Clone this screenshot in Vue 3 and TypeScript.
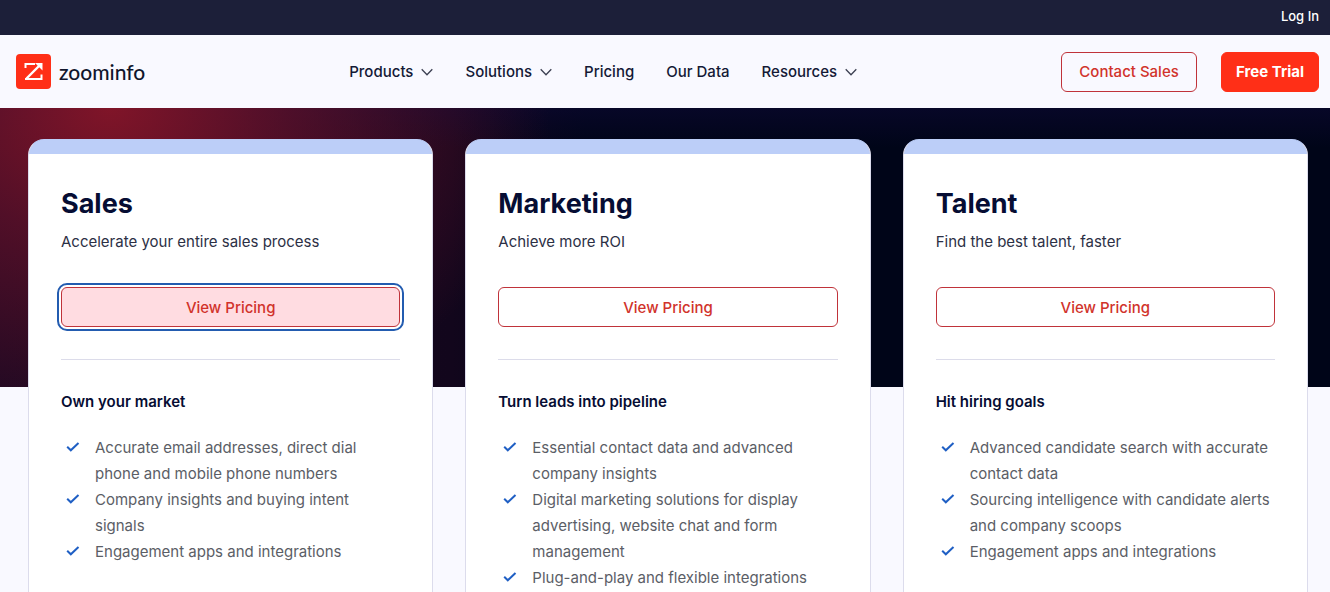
<script setup lang="ts">
interface NavItem {
  label: string
  menu: boolean
}
interface Plan {
  name: string
  tagline: string
  goal: string
  features: string[]
  active: boolean
}

const navItems: NavItem[] = [
  { label: 'Products', menu: true },
  { label: 'Solutions', menu: true },
  { label: 'Pricing', menu: false },
  { label: 'Our Data', menu: false },
  { label: 'Resources', menu: true },
]

const plans: Plan[] = [
  {
    name: 'Sales',
    tagline: 'Accelerate your entire sales process',
    goal: 'Own your market',
    features: [
      'Accurate email addresses, direct dial phone and mobile phone numbers',
      'Company insights and buying intent signals',
      'Engagement apps and integrations',
    ],
    active: true,
  },
  {
    name: 'Marketing',
    tagline: 'Achieve more ROI',
    goal: 'Turn leads into pipeline',
    features: [
      'Essential contact data and advanced company insights',
      'Digital marketing solutions for display advertising, website chat and form management',
      'Plug-and-play and flexible integrations',
    ],
    active: false,
  },
  {
    name: 'Talent',
    tagline: 'Find the best talent, faster',
    goal: 'Hit hiring goals',
    features: [
      'Advanced candidate search with accurate contact data',
      'Sourcing intelligence with candidate alerts and company scoops',
      'Engagement apps and integrations',
    ],
    active: false,
  },
]
</script>

<template>
  <div class="page">
    <div class="topbar"><a href="#login">Log In</a></div>

    <header class="header">
      <a class="logo" href="#home">
        <svg width="35" height="35" viewBox="0 0 35 35" aria-hidden="true">
          <rect width="35" height="35" rx="4" fill="#ff2f17" />
          <g fill="none" stroke="#fff" stroke-width="2">
            <path d="M9.500 14V10H19" />
            <path d="M23.500 11.500L10.500 24.500" stroke-width="2.400" />
            <path d="M9 25H25.500V20.500" />
          </g>
          <path d="M19 9H26.500V16.500Z" fill="#fff" />
        </svg>
        <span class="wordmark">zoominfo</span>
      </a>

      <nav class="nav" aria-label="Main">
        <template v-for="item in navItems" :key="item.label">
          <button v-if="item.menu" type="button" class="nav-item">
            {{ item.label }}
            <svg width="12" height="8" viewBox="0 0 12 8" aria-hidden="true">
              <path d="M.7 1.200L6 6.700L11.300 1.200" fill="none" stroke="#3c4052" stroke-width="1.300" />
            </svg>
          </button>
          <a v-else class="nav-item" :href="'#' + item.label">{{ item.label }}</a>
        </template>
      </nav>

      <div class="actions">
        <button type="button" class="btn outline contact">Contact Sales</button>
        <button type="button" class="btn solid">Free Trial</button>
      </div>
    </header>

    <main class="plans">
      <article v-for="plan in plans" :key="plan.name" class="card">
        <h2>{{ plan.name }}</h2>
        <p class="tagline">{{ plan.tagline }}</p>
        <button type="button" class="btn outline view" :class="{ active: plan.active }">View Pricing</button>
        <hr />
        <h3>{{ plan.goal }}</h3>
        <ul>
          <li v-for="feature in plan.features" :key="feature">
            <svg width="14" height="10" viewBox="0 0 14 10" aria-hidden="true">
              <path d="M1.200 4.800L4.800 8.300L12.500 1" fill="none" stroke="#1f5fc4" stroke-width="2" />
            </svg>
            <span>{{ feature }}</span>
          </li>
        </ul>
      </article>
    </main>
  </div>
</template>

<style>
body {
  margin: 0;
}
</style>

<style scoped>
.page {
  height: 100vh;
  overflow: hidden;
  background: #f9f9ff;
  color: #060d33;
  font-family: Inter, "Open Sans", sans-serif;
  font-size: 15px;
}
a {
  color: inherit;
  text-decoration: none;
}
button {
  font: inherit;
  cursor: pointer;
}
.topbar {
  display: flex;
  justify-content: flex-end;
  height: 35px;
  padding: 0 11px;
  background: #1c1f39;
  color: #fff;
  font-size: 13px;
  font-weight: 500;
  line-height: 32px;
}
.header {
  display: flex;
  align-items: center;
  justify-content: space-between;
  height: 73px;
  padding: 0 11px 0 16px;
}
.logo {
  display: flex;
  align-items: center;
  gap: 8px;
}
.wordmark {
  font-family: Lato, sans-serif;
  font-size: 21px;
  font-weight: 500;
  line-height: 32px;
  color: #10152c;
}
.nav {
  display: flex;
  gap: 32px;
}
.nav-item {
  display: flex;
  align-items: center;
  gap: 8px;
  padding: 0;
  border: 0;
  background: none;
  color: #141936;
  font-weight: 500;
  line-height: 24px;
}
.actions {
  display: flex;
  gap: 24px;
}
.btn {
  box-sizing: border-box;
  height: 40px;
  padding: 0 14px;
  border: 1px solid #ff2f17;
  border-radius: 6px;
  font-weight: 500;
  white-space: nowrap;
}
.outline {
  border-color: #c0333a;
  background: transparent;
  color: #d1332b;
}
.contact {
  min-width: 136px;
}
.solid {
  background: #ff2f17;
  color: #fff;
  font-weight: 700;
}
.plans {
  display: grid;
  grid-template-columns: repeat(3, 1fr);
  gap: 32px;
  padding: 31px 22px 32px 28px;
  background:
    radial-gradient(ellipse 440px 330px at 110px 0, rgba(140, 22, 40, 0.9), rgba(105, 18, 42, 0.7) 40%, transparent) 0 0 / 100% 279px no-repeat,
    linear-gradient(rgba(12, 8, 50, 0.6), transparent 40px) 0 0 / 100% 279px no-repeat,
    linear-gradient(90deg, #1a0822, #12061c 34%, #000518 44%, #000518) 0 0 / 100% 279px no-repeat;
}
.card {
  padding: 46px 32px 32px;
  border: 1px solid #dcdcec;
  border-top-color: #bccef8;
  border-radius: 16px 16px 0 0;
  background: linear-gradient(#bccef8 14px, #fff 14px);
}
h2 {
  margin: 0;
  font-size: 27px;
  font-weight: 700;
  line-height: 36px;
}
.tagline {
  margin: 8px 0 33px;
  color: #2c3045;
  line-height: 24px;
}
.view {
  display: block;
  width: 100%;
}
.view.active {
  background: #ffdce1;
  outline: 2px solid #235cb0;
  outline-offset: 2px;
}
hr {
  margin: 32px 0 30px;
  border: 0;
  border-top: 1px solid #dcdcea;
}
h3 {
  margin: 0;
  font-size: 15px;
  font-weight: 600;
  line-height: 24px;
}
ul {
  margin: 21px 0 0;
  padding: 0 0 0 5px;
  list-style: none;
}
li {
  display: flex;
  gap: 15px;
  color: #5b5e66;
  line-height: 26px;
}
li svg {
  flex: none;
  margin-top: 7px;
}
</style>
